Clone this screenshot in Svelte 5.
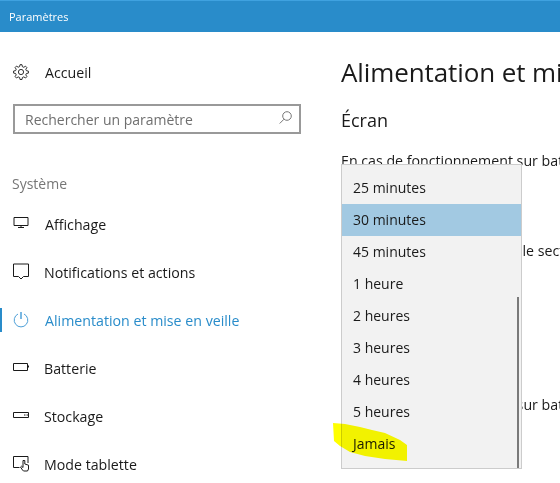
<script>
  const times = ['25 minutes', '30 minutes', '45 minutes', '1 heure', '2 heures', '3 heures', '4 heures', '5 heures', 'Jamais'];
</script>

<div class="window">
  <header class="titlebar">Paramètres</header>
  <div class="content">
    <nav class="sidebar">
      <div class="item wide">
        <svg class="ico" viewBox="0 0 16 16" fill="none" stroke="currentColor" stroke-width="0.9">
          <circle cx="8" cy="8" r="2.6" />
          <path d="M7 .7h2l.4 2 1.4.6 1.7-1.1 1.4 1.4-1.1 1.7.6 1.4 2 .4v2l-2 .4-.6 1.4 1.1 1.7-1.4 1.4-1.7-1.1-1.4.6-.4 2H7l-.4-2-1.4-.6-1.7 1.1-1.4-1.4 1.1-1.7-.6-1.4-2-.4V7l2-.4.6-1.4-1.1-1.7 1.4-1.4 1.7 1.1 1.4-.6z" />
        </svg>
        <span>Accueil</span>
      </div>
      <div class="search">
        <span>Rechercher un paramètre</span>
        <svg viewBox="0 0 13 13" fill="none" stroke="currentColor">
          <circle cx="8" cy="5" r="4.300" />
          <path d="M5 8.200L.7 12.500" />
        </svg>
      </div>
      <div class="section">Système</div>
      <div class="item wide">
        <svg class="ico" viewBox="0 0 16 16" fill="none" stroke="currentColor"><path d="M1 1.500h14v8H1zM8 9.500v2M5 11.500h6" /></svg>
        <span>Affichage</span>
      </div>
      <div class="item">
        <svg class="ico" viewBox="0 0 16 16" fill="none" stroke="currentColor"><path d="M.5 0h15v12.500h-5L8 15l-2.500-2.500h-5z" /></svg>
        <span>Notifications et actions</span>
      </div>
      <div class="item wide active">
        <svg class="ico power" viewBox="0 0 16 16" fill="none" stroke="currentColor"><path d="M5 2A6.800 6.800 0 1 0 11 2" /><path d="M8 0v7" stroke-width="1.500" /></svg>
        <span>Alimentation et mise en veille</span>
      </div>
      <div class="item">
        <svg class="ico" viewBox="0 0 16 16" fill="none" stroke="currentColor"><path d="M.5 3.500h14v7H.5zM15.500 5.500v2" /></svg>
        <span>Batterie</span>
      </div>
      <div class="item">
        <svg class="ico" viewBox="0 0 16 16" fill="none" stroke="currentColor"><path d="M.5 4.500h15v5H.5zM11 7h1.500M13.500 7H15" /></svg>
        <span>Stockage</span>
      </div>
      <div class="item">
        <svg class="ico" viewBox="0 0 16 16" fill="none" stroke="currentColor"><path d="M6.500 11.500h-6V.5h14.500V7M9.500 14l-2-3 1-.8 1.500 1.300V4.500h1.800V8l3.700 1.200V13l-1 2h-4z" /></svg>
        <span>Mode tablette</span>
      </div>
    </nav>
    <main class="main">
      <h1>Alimentation et mise en veille</h1>
      <h2>Écran</h2>
      <p>En cas de fonctionnement sur batterie</p>
      <p class="second">En cas d'alimentation sur le secteur</p>
      <p class="third">En cas de fonctionnement sur batterie</p>
      <div class="menu">
        {#each times as t, i}
          <div class="opt" class:sel={i === 1}>{t}</div>
        {/each}
        <div class="thumb"></div>
        <svg class="marker" viewBox="0 0 80 44"><path d="M1 3L13 4 28 7 40 10 53 13 68 20 75 25 75 41 53 39 33 36 18 32 8 26 2 21z" /></svg>
      </div>
    </main>
  </div>
</div>

<style>
  :global(body) {
    margin: 0;
  }
  .window {
    width: 560px;
    height: 483px;
    overflow: hidden;
    background: #fff;
    font-family: "Open Sans", "Noto Sans", sans-serif;
    color: #1a1a1a;
  }
  .titlebar {
    height: 31px;
    line-height: 32px;
    padding-left: 9px;
    background: #298cca;
    border-top: 1px solid #3fa2e0;
    color: #fff;
    font-size: 11px;
  }
  .content {
    display: flex;
    width: 900px;
  }
  .sidebar {
    width: 341px;
    flex: none;
    padding-top: 16px;
  }
  .item {
    position: relative;
    height: 48px;
    display: flex;
    align-items: center;
    gap: 15px;
    padding-left: 13px;
    font-size: 14.2px;
  }
  .wide {
    gap: 16px;
  }
  .ico {
    width: 16px;
    height: 16px;
    flex: none;
    overflow: visible;
  }
  .active {
    color: #298cca;
  }
  .active::before {
    content: "";
    position: absolute;
    left: 0;
    top: 12px;
    width: 2px;
    height: 24px;
    background: #298cca;
  }
  .power {
    color: #4ea0d8;
  }
  .search {
    width: 267px;
    height: 26px;
    margin: 8px 0 0 13px;
    border: 2px solid #999;
    display: flex;
    align-items: center;
    justify-content: space-between;
    padding: 0 7px 0 10px;
    font-size: 14px;
    color: #6f6f6f;
  }
  .search svg {
    width: 13px;
    height: 13px;
    margin-top: -3px;
    color: #777;
  }
  .section {
    margin: 40px 0 6px 12px;
    font-size: 14px;
    line-height: 20px;
    color: #767676;
  }
  .main {
    position: relative;
    flex: 1;
  }
  h1 {
    margin: 20px 0 0;
    font-size: 26px;
    letter-spacing: -0.1px;
    line-height: 40px;
    font-weight: 400;
    white-space: nowrap;
  }
  h2 {
    margin: 14px 0 0;
    font-size: 18px;
    line-height: 28px;
    font-weight: 400;
  }
  p {
    margin: 17px 0 0;
    font-size: 14.2px;
    line-height: 20px;
    white-space: nowrap;
  }
  .second {
    margin-top: 70px;
    padding-left: 12px;
  }
  .third {
    margin-top: 134px;
  }
  .menu {
    position: absolute;
    left: 0;
    top: 132px;
    width: 179px;
    padding: 7px 0 8px;
    background: #f2f2f2;
    border: 1px solid #ccc;
  }
  .opt {
    height: 32px;
    line-height: 32px;
    padding-left: 11px;
    font-size: 14px;
  }
  .sel {
    background: #a2c9e2;
  }
  .thumb {
    position: absolute;
    right: 2px;
    top: 132px;
    bottom: 0;
    width: 2px;
    background: #7a7a7a;
  }
  .marker {
    position: absolute;
    left: -10px;
    top: 255px;
    width: 80px;
    height: 44px;
    fill: #ffff00;
    mix-blend-mode: multiply;
  }
</style>
